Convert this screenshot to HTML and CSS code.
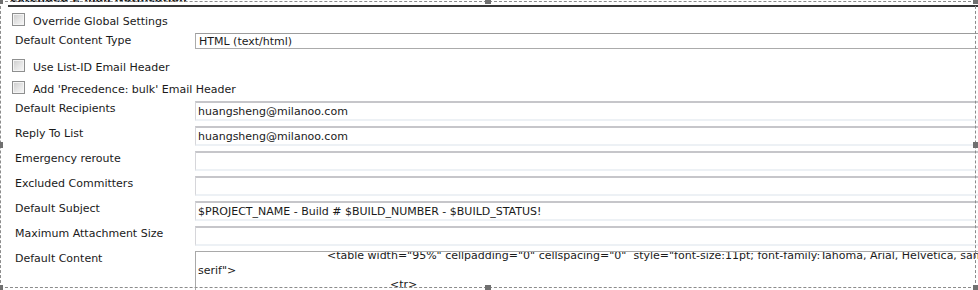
FILE: index.html
```html
<!DOCTYPE html>
<html lang="en">
<head>
<meta charset="UTF-8">
<meta name="viewport" content="width=device-width, initial-scale=1.0">
<title>Extended E-mail Notification</title>
<link rel="stylesheet" href="styles.css">
</head>
<body>
<div class="page">
  <div class="section-header">Extended E-mail Notification</div>
  <form class="settings">
    <label class="check-row">
      <input type="checkbox" class="check">
      <span>Override Global Settings</span>
    </label>
    <div class="field-label">Default Content Type</div>
    <div class="field"><div class="select">HTML (text/html)</div></div>
    <label class="check-row">
      <input type="checkbox" class="check">
      <span>Use List-ID Email Header</span>
    </label>
    <label class="check-row">
      <input type="checkbox" class="check">
      <span>Add 'Precedence: bulk' Email Header</span>
    </label>
    <div class="field-label">Default Recipients</div>
    <div class="field"><input type="text" class="text" value="huangsheng@milanoo.com"></div>
    <div class="field-label">Reply To List</div>
    <div class="field"><input type="text" class="text" value="huangsheng@milanoo.com"></div>
    <div class="field-label">Emergency reroute</div>
    <div class="field"><input type="text" class="text" value=""></div>
    <div class="field-label">Excluded Committers</div>
    <div class="field"><input type="text" class="text" value=""></div>
    <div class="field-label">Default Subject</div>
    <div class="field"><input type="text" class="text" value="$PROJECT_NAME - Build # $BUILD_NUMBER - $BUILD_STATUS!"></div>
    <div class="field-label">Maximum Attachment Size</div>
    <div class="field"><input type="text" class="text" value=""></div>
    <div class="field-label">Default Content</div>
    <div class="field">
      <div class="content-box">
        <div class="content-lines">
          <div class="line indent-1">&lt;table width="95%" cellpadding="0" cellspacing="0"  style="font-size:11pt; font-family:Tahoma, Arial, Helvetica, sans-</div>
          <div class="line">serif"&gt;</div>
          <div class="line indent-2">&lt;tr&gt;</div>
        </div>
      </div>
    </div>
  </form>

  <!-- capture selection frame -->
  <div class="frame">
    <span class="handle h-tl"></span>
    <span class="handle h-tm"></span>
    <span class="handle h-tr"></span>
    <span class="handle h-ml"></span>
    <span class="handle h-mr"></span>
    <span class="handle h-bl"></span>
    <span class="handle h-bm"></span>
    <span class="handle h-br"></span>
  </div>
</div>
</body>
</html>
```

FILE: styles.css
```css
body {
  margin: 0;
  padding: 0;
  background-color: #fff;
  font-family: "DejaVu Sans", Verdana, sans-serif;
  font-size: 11px;
  color: #1a1a1a;
  overflow: hidden;
}
.page {
  position: relative;
  width: 978px;
  height: 290px;
  overflow: hidden;
}
.section-header {
  margin: -7px 0 0 8px;
  width: 1000px;
  padding-left: 2px;
  font-weight: bold;
  font-size: 11px;
  line-height: 12px;
  border-bottom: 2px solid #363636;
}
.settings {
  display: grid;
  grid-template-columns: 195px 800px;
  grid-template-rows: 20px 26px 22px 20px repeat(6, 25px) 60px;
  padding-top: 6px;
}
.check-row {
  grid-column: 1 / -1;
  display: flex;
  align-items: flex-start;
  gap: 8px;
  padding-left: 12px;
  line-height: 14px;
}
.check-row span {
  margin-top: 2px;
}
.check {
  appearance: none;
  -webkit-appearance: none;
  margin: 0;
  width: 13px;
  height: 13px;
  border: 1px solid #8e8f8f;
  background: linear-gradient(135deg, #cbcbcb 0%, #e6e6e6 55%, #f7f7f7 100%);
  box-shadow: inset 0 0 0 1px #f4f4f4;
}
.field-label {
  padding: 1px 0 0 15px;
  line-height: 14px;
}
.select {
  box-sizing: border-box;
  height: 16px;
  width: 800px;
  padding: 0 3px;
  border: 1px solid #ababab;
  border-top-color: #9c9c9c;
  line-height: 15px;
}
.text {
  box-sizing: border-box;
  display: block;
  width: 800px;
  height: 20px;
  margin: 0;
  padding: 1px 2px 0;
  border-style: solid;
  border-width: 2px 1px 2px 1px;
  border-color: #c6c6ca #d6d6da #edf1f5 #d6d6da;
  font-family: "DejaVu Sans", Verdana, sans-serif;
  font-size: 11px;
  color: #1a1a1a;
  outline: none;
}
.content-box {
  box-sizing: border-box;
  width: 800px;
  height: 60px;
  border: 1px solid #a9a9a9;
  overflow: hidden;
  padding-left: 2px;
}
.content-lines {
  margin-top: -3px;
  line-height: 14.5px;
}
.line {
  white-space: pre;
}
.indent-1 {
  padding-left: 129px;
}
.indent-2 {
  padding-left: 192px;
}
.frame {
  position: absolute;
  left: 0;
  top: 1px;
  width: 976px;
  height: 287px;
  box-sizing: border-box;
  border: 1px dashed #8c8c8c;
}
.handle {
  position: absolute;
  width: 6px;
  height: 6px;
  background-color: #707070;
}
.h-tl { left: -4px; top: -4px; }
.h-tm { left: calc(50% - 3px); top: -4px; }
.h-tr { right: -4px; top: -4px; }
.h-ml { left: -4px; top: calc(50% - 3px); }
.h-mr { right: -4px; top: calc(50% - 3px); }
.h-bl { left: -4px; bottom: -4px; }
.h-bm { left: calc(50% - 3px); bottom: -4px; }
.h-br { right: -4px; bottom: -4px; }
```
